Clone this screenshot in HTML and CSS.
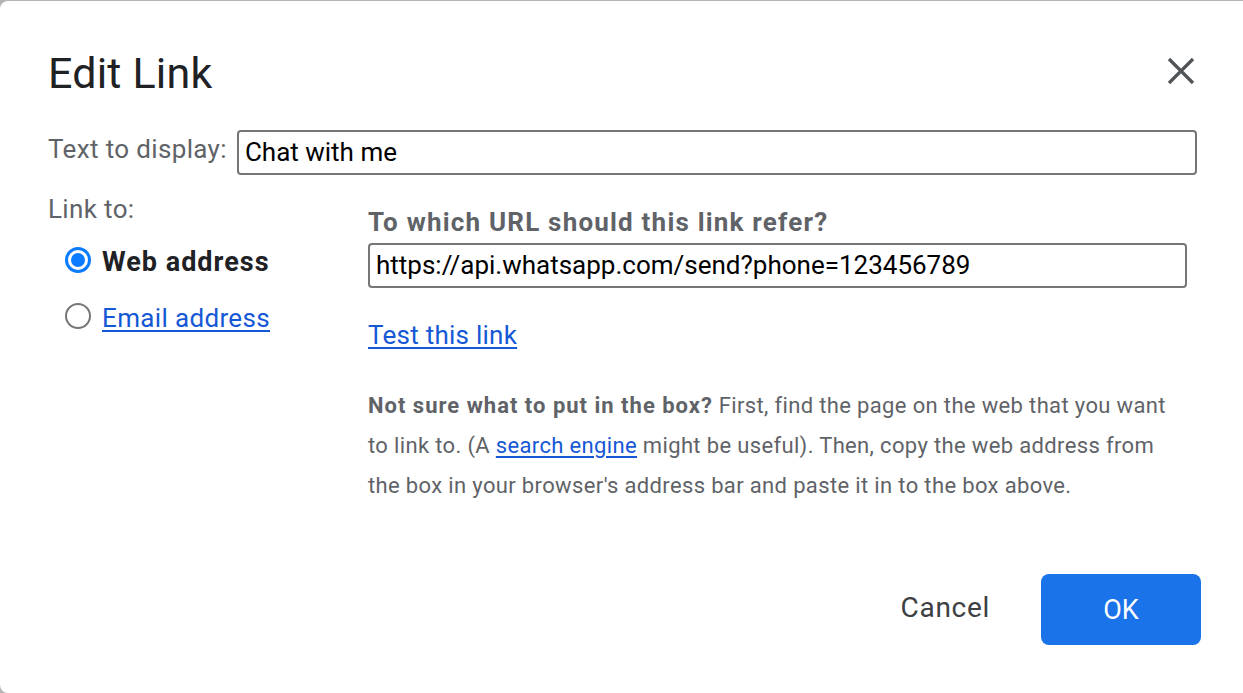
FILE: index.html
```html
<!DOCTYPE html>
<html lang="en">
<head>
<meta charset="utf-8">
<title>Edit Link</title>
<link rel="stylesheet" href="styles.css">
</head>
<body>
<div class="dialog">
  <div class="header">
    <h1 class="title">Edit Link</h1>
    <button class="close" aria-label="Close">
      <svg width="30" height="30" viewBox="0 0 30 30"><path d="M3 3 L27 27 M27 3 L3 27" stroke="#505357" stroke-width="3.2" stroke-linecap="butt" fill="none"/></svg>
    </button>
  </div>
  <div class="text-row">
    <label class="label">Text to display:</label>
    <div class="field field-wide">Chat with me</div>
  </div>
  <div class="main">
    <div class="left">
      <div class="label link-to">Link to:</div>
      <div class="radio-row">
        <span class="radio radio-on"><span class="dot"></span></span>
        <span class="radio-text bold">Web address</span>
      </div>
      <div class="radio-row">
        <span class="radio"></span>
        <a class="link radio-text email" href="#">Email address</a>
      </div>
    </div>
    <div class="right">
      <div class="question">To which URL should this link refer?</div>
      <div class="field field-url">https://api.whatsapp.com/send?phone=123456789</div>
      <a class="link test-link" href="#">Test this link</a>
      <p class="help"><b>Not sure what to put in the box?</b> First, find the page on the web that you want to link to. (A <a class="link" href="#">search engine</a> might be useful). Then, copy the web address from the box in your browser's address bar and paste it in to the box above.</p>
    </div>
  </div>
  <div class="footer">
    <button class="btn-cancel">Cancel</button>
    <button class="btn-ok">OK</button>
  </div>
</div>
</body>
</html>
```

FILE: styles.css
```css
html, body {
  margin: 0;
  padding: 0;
  height: 100%;
  overflow: hidden;
}
body {
  background: #b4b4b4;
  font-family: Roboto, "Noto Sans", Arial, sans-serif;
}
.dialog {
  box-sizing: border-box;
  margin-top: 1px;
  width: 1253px;
  height: 692px;
  background: #ffffff;
  border-radius: 8px;
  padding: 0 56px 0 48px;
  display: flex;
  flex-direction: column;
}
.header {
  display: flex;
  justify-content: space-between;
  align-items: center;
  padding-top: 46px;
  height: 52px;
}
.title {
  margin: 0;
  font-weight: 400;
  font-size: 43px;
  line-height: 52px;
  color: #202124;
  letter-spacing: 0.2px;
}
.close {
  border: 0;
  background: none;
  padding: 0;
  width: 30px;
  height: 30px;
  margin-right: 1px;
  margin-top: -5px;
}
.close svg { display: block; }
.text-row {
  display: flex;
  align-items: center;
  margin-top: 31px;
  gap: 10px;
}
.label {
  font-size: 26px;
  color: #5f6368;
  letter-spacing: 0.35px;
  line-height: 32px;
}
.text-row .label { margin-top: -7px; }
.field {
  box-sizing: border-box;
  border: 2px solid #767676;
  border-radius: 4px;
  font-size: 26px;
  color: #000;
  height: 45px;
  line-height: 41px;
  padding: 0 6px;
  white-space: nowrap;
}
.field-wide { flex: 1; }
.main {
  display: flex;
  margin-top: 18px;
}
.left {
  width: 320px;
  flex: none;
}
.link-to { margin-top: 0; }
.radio-row {
  display: flex;
  align-items: center;
  gap: 11px;
  padding-left: 17px;
  height: 30px;
}
.radio-row + .radio-row { margin-top: 26px; }
.left .label + .radio-row { margin-top: 22px; }
.radio {
  box-sizing: border-box;
  width: 26px;
  height: 26px;
  border-radius: 50%;
  border: 2px solid #767676;
  display: flex;
  align-items: center;
  justify-content: center;
  flex: none;
  margin-top: -5px;
}
.radio-on { border: 3px solid #0b7cff; }
.dot {
  width: 14px;
  height: 14px;
  border-radius: 50%;
  background: #0b7cff;
}
.radio-text {
  font-size: 26px;
  line-height: 30px;
}
.bold {
  font-weight: 700;
  color: #202124;
  font-size: 27px;
  letter-spacing: 1px;
}
.email { letter-spacing: 0.35px; }
.link {
  color: #1558d6;
  text-decoration: underline;
  text-underline-offset: 3px;
}
.right {
  flex: 1;
  padding-right: 10px;
}
.question {
  font-size: 26px;
  font-weight: 700;
  color: #5f6368;
  letter-spacing: 1.2px;
  line-height: 30px;
  margin-top: 14px;
}
.field-url {
  margin-top: 6px;
}
.test-link {
  display: inline-block;
  font-size: 26px;
  line-height: 32px;
  margin-top: 31px;
  letter-spacing: 0.25px;
}
.help {
  margin: 35px 0 0;
  font-size: 22px;
  line-height: 40px;
  color: #5f6368;
  letter-spacing: 0.35px;
  padding-right: 10px;
}
.help b {
  color: #5f6368;
  letter-spacing: 1px;
}
.footer {
  margin-top: auto;
  margin-bottom: 48px;
  margin-right: -4px;
  display: flex;
  justify-content: flex-end;
  align-items: center;
  gap: 45px;
}
.btn-cancel {
  border: 0;
  background: none;
  font-family: inherit;
  font-size: 28px;
  letter-spacing: 0.7px;
  color: #3c4043;
  padding: 0 6px;
  margin-top: -4px;
}
.btn-ok {
  border: 0;
  width: 160px;
  height: 71px;
  border-radius: 8px;
  background: #1a73e8;
  color: #fff;
  font-family: inherit;
  font-size: 27px;
}
```
